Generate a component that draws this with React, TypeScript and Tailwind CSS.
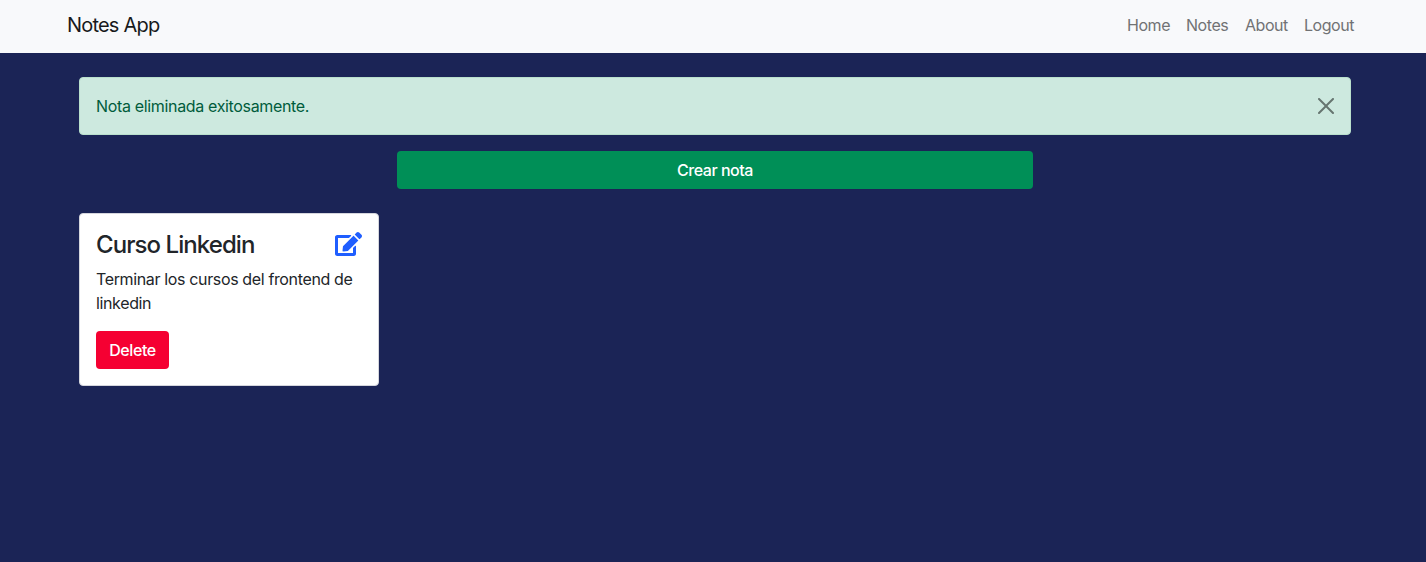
import { FaEdit } from "react-icons/fa";

const links = [
  { label: "Home", width: "w-[43px]" },
  { label: "Notes", width: "w-[43px]" },
  { label: "About", width: "w-[43px]" },
  { label: "Logout", width: "w-[51px]" },
];

export default function App() {
  return (
    <div className="min-h-screen bg-[#1b2456] font-['Inter',sans-serif] text-base text-[#212529]">
      <nav className="flex h-[53px] items-center justify-between bg-[#f8f9fb] pl-[67px] pr-[71px]">
        <a className="whitespace-nowrap pb-0.5 text-[20px] leading-[29px] tracking-[-0.8px] text-[#18191b]">Notes App</a>
        <div className="flex gap-4 pb-[3px]">
          {links.map((link) => (
            <a key={link.label} className={`${link.width} whitespace-nowrap tracking-[-0.45px] text-[#717274]`}>{link.label}</a>
          ))}
        </div>
      </nav>
      <main className="pt-6 pl-[79px] pr-[75px]">
        <div className="flex h-[58px] items-center justify-between rounded border border-[#b9dfcc] bg-[#cde9df] px-4 text-[#005c3c]">
          <span className="tracking-[-0.34px]">Nota eliminada exitosamente.</span>
          <svg className="size-4 text-[#667570]" viewBox="0 0 16 16" fill="currentColor">
            <path d="M.293.293a1 1 0 0 1 1.414 0L8 6.586 14.293.293a1 1 0 1 1 1.414 1.414L9.414 8l6.293 6.293a1 1 0 0 1-1.414 1.414L8 9.414l-6.293 6.293a1 1 0 0 1-1.414-1.414L6.586 8 .293 1.707a1 1 0 0 1 0-1.414z" />
          </svg>
        </div>
        <button className="mx-auto mt-4 block h-[38px] w-[636px] rounded bg-[#008f57] font-medium tracking-[-0.46px] text-white">Crear nota</button>
        <section className="mt-6 h-[173px] w-[300px] rounded border border-[#d5d6dd] bg-white p-4">
          <div className="flex h-[29px] items-start justify-between">
            <h4 className="text-2xl font-medium leading-[29px] tracking-[-0.93px]">Curso Linkedin</h4>
            <FaEdit className="mt-0.5 h-6 w-[27px] text-[#1f5eff]" />
          </div>
          <p className="mt-2 tracking-[-0.36px]">Terminar los cursos del frontend de<br />linkedin</p>
          <button className="mt-4 h-[38px] w-[73px] rounded bg-[#f50032] font-medium tracking-[-0.4px] text-white">Delete</button>
        </section>
      </main>
    </div>
  );
}
